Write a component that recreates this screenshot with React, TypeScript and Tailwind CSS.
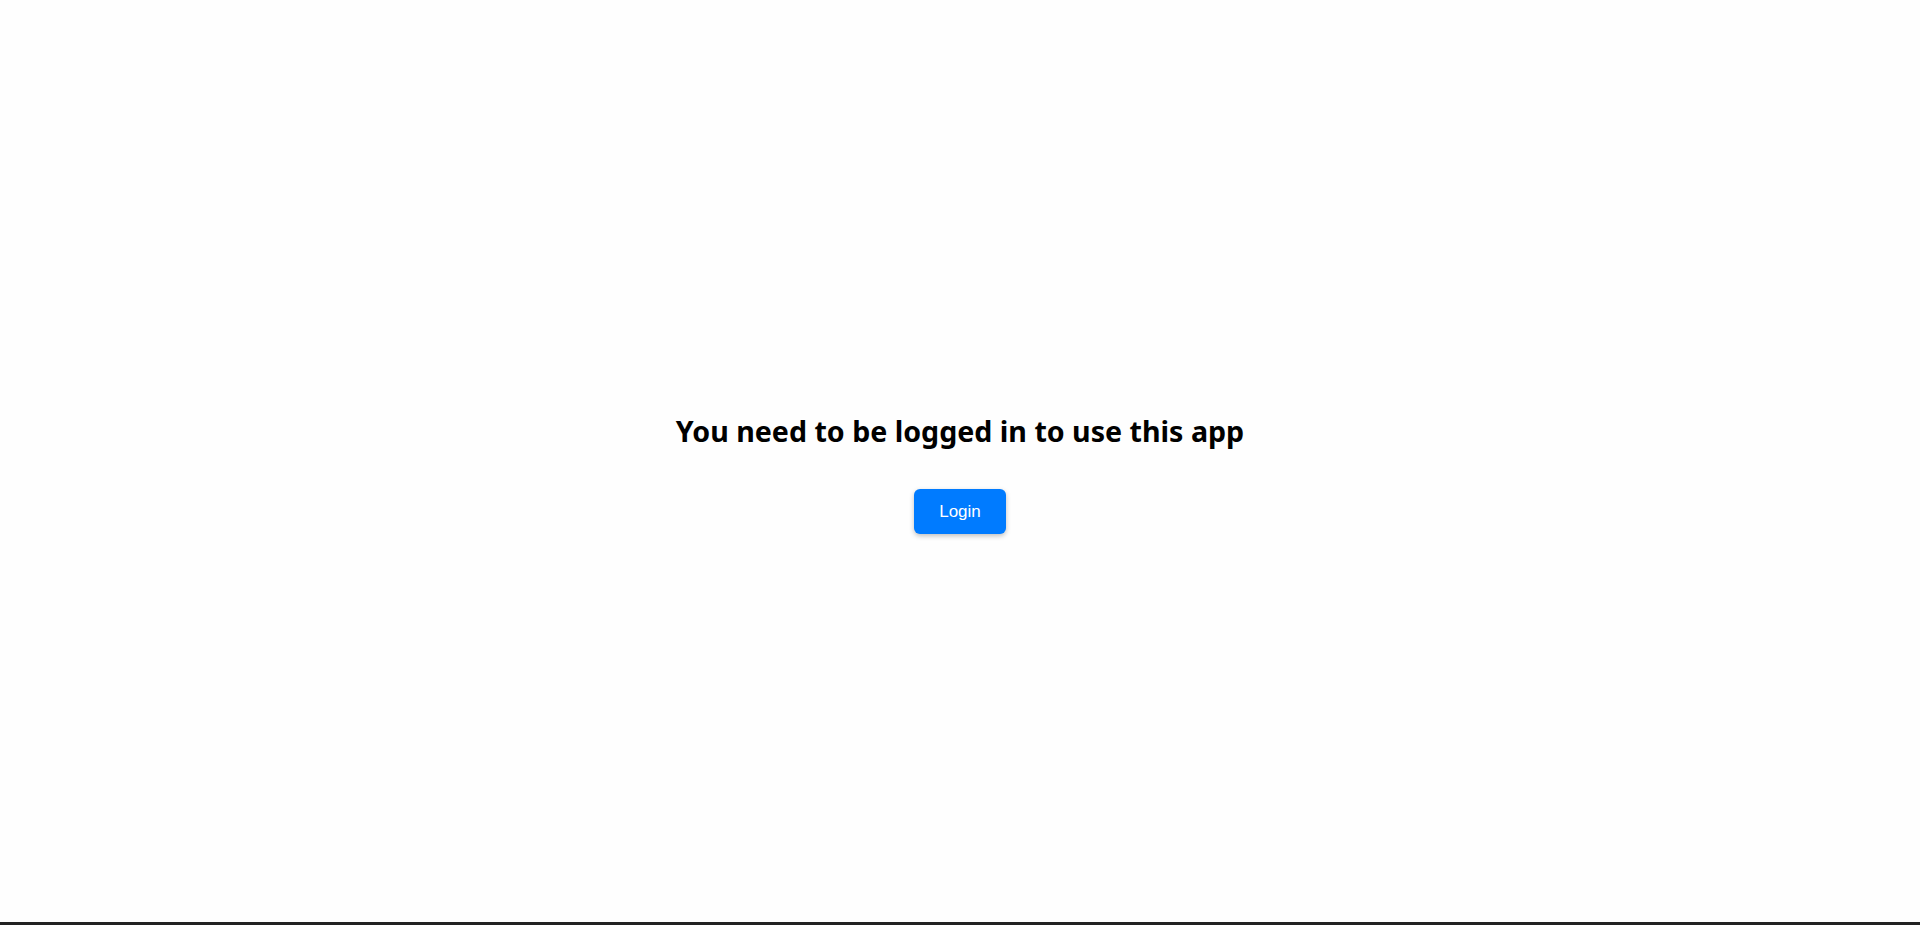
export default function App() {
  return (
    <div className="flex h-[925px] w-full flex-col border-b-[3px] border-[#222222] bg-[#fefefe]">
      <main className="flex flex-1 flex-col items-center pt-[411px]">
        <h2 className="font-['Noto_Sans',sans-serif] text-[28.6px] leading-[40px] font-bold text-black">
          You need to be logged in to use this app
        </h2>
        <button className="mt-[38px] h-[45px] w-[92px] rounded-md bg-[#007bff] font-['Liberation_Sans',Arial,sans-serif] text-[17px] text-white shadow-[0_2px_5px_rgba(0,0,0,0.25)]">
          Login
        </button>
      </main>
    </div>
  );
}
